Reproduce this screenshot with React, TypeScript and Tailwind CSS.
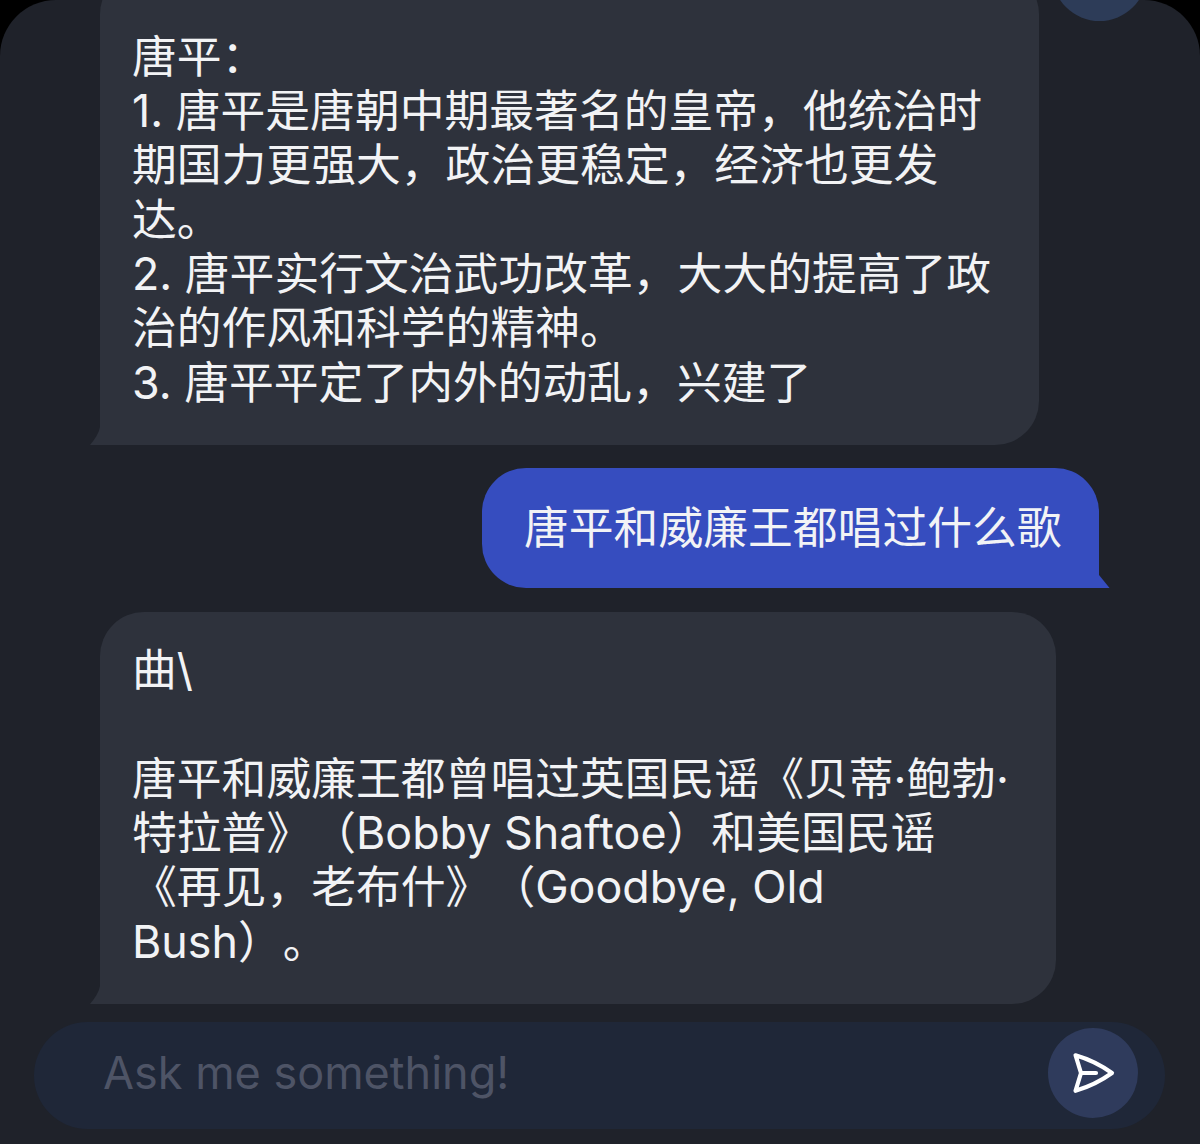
import React from "react";

const font = { fontFamily: '"Inter", "Noto Sans CJK SC", sans-serif' };

function LeftTail() {
  return (
    <svg className="absolute left-[-10px] bottom-0" width="12" height="18" viewBox="0 0 12 18">
      <path d="M10 0 C9 6 5 12 0 18 L12 18 L12 0 Z" fill="#2e323c" />
    </svg>
  );
}

function RightTail() {
  return (
    <svg className="absolute right-[-11px] bottom-0" width="13" height="15" viewBox="0 0 13 15">
      <path d="M0 0 L2 2 L13 15.5 L0 15.5 Z" fill="#364dbf" />
    </svg>
  );
}

export default function App() {
  return (
    <div className="h-[1144px] w-[1200px] overflow-hidden bg-black" style={font}>
      <div className="relative flex h-full flex-col justify-end overflow-hidden rounded-t-[56px] bg-[#1f222a] pb-[15px] text-[44.8px] leading-[54.3px] font-normal text-[#f2f3f5] [text-spacing-trim:space-all]">
        <div className="absolute right-[53px] top-[-74px] h-[95px] w-[95px] rounded-full bg-[#2d3c58]" />

        <div className="relative ml-[100px] w-[939px] shrink-0 rounded-[44px] rounded-bl-none bg-[#2e323c] pl-[32px] pt-[60px] pb-[35px]">
          <LeftTail />
          唐平：
          <br />
          1. 唐平是唐朝中期最著名的皇帝，他统治时
          <br />
          期国力更强大，政治更稳定，经济也更发
          <br />
          达。
          <br />
          2. 唐平实行文治武功改革，大大的提高了政
          <br />
          治的作风和科学的精神。
          <br />
          3. 唐平平定了内外的动乱，兴建了
        </div>

        <div className="relative ml-[482px] mt-[23px] w-[617px] shrink-0 rounded-[44px] rounded-br-none bg-[#364dbf] py-[33px] pl-[42px] whitespace-nowrap">
          <RightTail />
          唐平和威廉王都唱过什么歌
        </div>

        <div className="relative ml-[100px] mt-[24px] w-[956px] shrink-0 rounded-[44px] rounded-bl-none bg-[#2e323c] pl-[32px] pt-[31px] pb-[35px]">
          <LeftTail />
          曲\
          <br />
          <br />
          唐平和威廉王都曾唱过英国民谣《贝蒂·鲍勃·
          <br />
          特拉普》（Bobby Shaftoe）和美国民谣
          <br />
          《再见，老布什》（Goodbye, Old
          <br />
          Bush）。
        </div>

        <div className="ml-[34px] mt-[18px] flex h-[107px] w-[1131px] shrink-0 items-center justify-between rounded-full bg-[#1f2738] pb-[5px] pl-[69px] pr-[27px]">
          <span className="text-[45px] text-[#4e5466]">Ask me something!</span>
          <button className="flex h-[90px] w-[90px] items-center justify-center rounded-full bg-[#2f3b5c]">
            <svg width="48" height="48" viewBox="0 0 24 24" fill="none" stroke="#ffffff" strokeWidth="2.1" strokeLinecap="round" strokeLinejoin="round">
              <path d="M6 12L3.269 3.126A59.768 59.768 0 0121.485 12 59.77 59.77 0 013.27 20.876L5.999 12zm0 0h7.5" />
            </svg>
          </button>
        </div>
      </div>
    </div>
  );
}
